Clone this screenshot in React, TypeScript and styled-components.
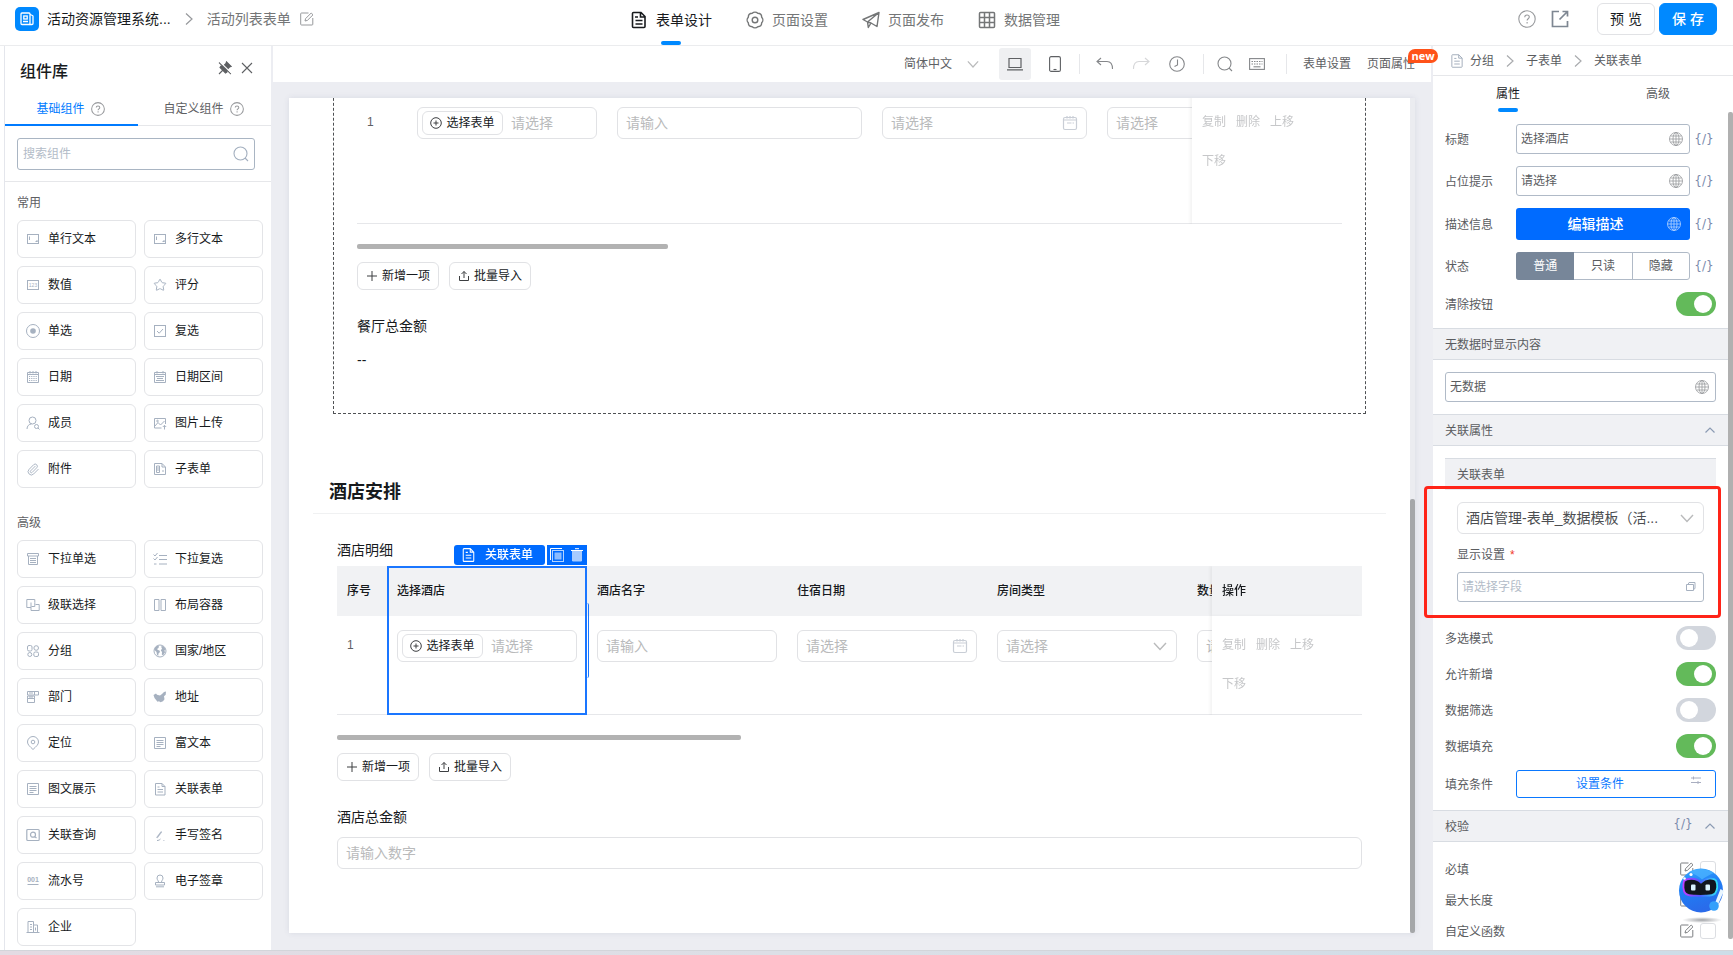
import React from "react";
import styled, { createGlobalStyle, css } from "styled-components";
import { Star, Paperclip, Earth } from "lucide-react";

const GlobalStyle = createGlobalStyle`
  *, *::before, *::after { box-sizing: border-box; }
  body {
    margin: 0;
    background: #fff;
    color: #171a1d;
    font-family: "Liberation Sans", "Noto Sans CJK SC", sans-serif;
    font-size: 12px;
    line-height: 18px;
  }
  button, input, select { font: inherit; color: inherit; margin: 0; }
  button { padding: 0; border: 0; background: none; cursor: pointer; white-space: nowrap; }
  h1, h2, h3, p, ul { margin: 0; padding: 0; font-weight: 400; }
  svg { display: block; flex: none; }
`;

/* ---------- icons ---------- */

type IconProps = {
  w?: number;
  h?: number;
  box?: string;
  color?: string;
  sw?: number;
  children: React.ReactNode;
};

const Icon = ({ w = 14, h = w, box, color = "currentColor", sw = 1, children }: IconProps) => (
  <svg
    width={w}
    height={h}
    viewBox={box ?? `0 0 ${w} ${h}`}
    fill="none"
    stroke={color}
    strokeWidth={sw}
    aria-hidden="true"
  >
    {children}
  </svg>
);

const HelpIcon = ({ size = 14, color = "#97999c" }) => (
  <Icon w={size} box="0 0 18 18" color={color} sw={size > 15 ? 1.1 : 1.3}>
    <circle cx="9" cy="9" r="8.2" />
    <path d="M6.7 7.2c0-1.4 1-2.2 2.3-2.2s2.3.8 2.3 2c0 1.7-2.2 1.8-2.2 3.5" />
    <path d="M9.1 12v1.5" />
  </Icon>
);

const ChevronRight = ({ color = "#97999c" }) => (
  <Icon w={8} h={14} color={color} sw={1.2}>
    <path d="M1 1.5 7 7 1 12.5" />
  </Icon>
);

const ChevronDown = ({ w = 14, color = "#b9babb" }) => (
  <Icon w={w} h={w} box="0 0 14 14" color={color} sw={1.4}>
    <path d="M1 4 7 10.5 13 4" />
  </Icon>
);

const CaretUp = () => (
  <Icon w={10} h={6} color="#8b9bb3" sw={1.2}>
    <path d="M.5 5.5 5 1l4.500 4.500" />
  </Icon>
);

const SearchIcon = ({ color = "#a3afbf" }) => (
  <Icon w={16} color={color} sw={1.1}>
    <circle cx="7.500" cy="7.500" r="6.500" />
    <path d="m12 12 3 3" />
  </Icon>
);

const GlobeIcon = ({ color = "#97999c" }) => (
  <Icon w={14} color={color} sw={0.8}>
    <circle cx="7" cy="7" r="6.500" />
    <ellipse cx="7" cy="7" rx="3" ry="6.500" />
    <path d="M7 .5v13M.5 7h13M1.500 4h11M1.500 10h11" />
  </Icon>
);

const DocIcon = ({ w = 14, h = 15, color = "currentColor", sw = 1 }) => (
  <Icon w={w} h={h} box="0 0 14 16" color={color} sw={sw}>
    <path d="M1 1.500A.8.8 0 0 1 1.800.7H9L13 4.700v9.800a.8.8 0 0 1-.8.8H1.800a.8.8 0 0 1-.8-.8zM9 .7v4h4M3.800 5h2.500M3.800 8.200h6.400M3.800 11.500h6.400" />
  </Icon>
);

const CalendarIcon = () => (
  <Icon w={16} h={16} color="#c9ced6" sw={1.2}>
    <rect x="1.500" y="2.500" width="13" height="12" rx="1.500" />
    <path d="M2 5h12M5 1v2.500M8 1v2.500M11 1v2.500M5 8h4.500M10.500 8H12" />
  </Icon>
);

const EditIcon = ({ color = "#97999c" }) => (
  <Icon w={14} color={color}>
    <path d="M8.500 1H1.500a.8.8 0 0 0-.8.8v10.400a.8.8 0 0 0 .8.8h10.500a.8.8 0 0 0 .8-.8V6" />
    <path d="m5 9 .6-2.400L11.200 1l1.800 1.800-5.600 5.600z" />
  </Icon>
);

const partIcons: Record<string, React.ReactNode> = {
  field: (
    <Icon>
      <rect x="1.500" y="2.500" width="11" height="9" />
      <path d="M3.500 4.500v3.500M9.500 9.500h2M11 8v2" />
    </Icon>
  ),
  number: (
    <Icon>
      <rect x="1.500" y="2.500" width="11" height="9" />
      <text x="7" y="9" fontSize="5" textAnchor="middle" fill="currentColor" stroke="none">
        123
      </text>
    </Icon>
  ),
  star: <Star size={14} strokeWidth={1.7} />,
  radio: (
    <Icon>
      <circle cx="7" cy="7" r="6.500" />
      <circle cx="7" cy="7" r="2.800" fill="currentColor" stroke="none" />
    </Icon>
  ),
  check: (
    <Icon>
      <rect x="1.500" y="1.500" width="11" height="11" />
      <path d="m4 7 2.200 2.200L10 5" />
    </Icon>
  ),
  date: (
    <Icon>
      <path d="M1.500 2.500h11v10h-11zM1.500 4.500h11M4 1v2.500M7 1v2.500M10 1v2.500" />
      <path d="M3 6.500h8M3 8.500h8M3 10.500h8" strokeDasharray="1.200 1" />
    </Icon>
  ),
  range: (
    <Icon>
      <path d="M1.500 2.500h11v10h-11zM1.500 4.500h11M4 1v2.500M10 1v2.500M3 6.500h8M4 8.500h6M3 10.500h8" />
    </Icon>
  ),
  member: (
    <Icon>
      <circle cx="6.500" cy="4.500" r="3.500" />
      <path d="M1 13c0-3 2-5 4.500-5" />
      <circle cx="10.500" cy="10.500" r="2" />
      <path d="m12 12 1.500 1.500" />
    </Icon>
  ),
  image: (
    <Icon>
      <path d="M8.500 12H1.500V2.500h11V8M2 10l3-3.500L7.500 9l4-4M11.500 13.500V9.500M9.800 11l1.700-1.700L13.200 11" />
      <circle cx="4.500" cy="5" r=".8" />
    </Icon>
  ),
  clip: <Paperclip size={13} strokeWidth={1.7} />,
  subform: (
    <Icon>
      <path d="M1.500 1.500H9l3.500 3.500v7.500h-11zM3.500 4h3v6.500h-3zM3.500 6h3M3.500 8h3M9 1.500V5h3M9 9h2" />
    </Icon>
  ),
  dropdown: (
    <Icon>
      <path d="M1.500 1.500h11v2.500h-11zM2.500 4v8.500h9V4M4 6.500h6M4 8.500h6M4 10.500h6" />
    </Icon>
  ),
  dropcheck: (
    <Icon>
      <path d="m.5 2.500 1.500 1.500L4.500 1M.5 6.500 2 8l2.500-3M6 3.500h8M6 7.500h8M6 12h8M1 12h2.500" />
    </Icon>
  ),
  cascade: (
    <Icon>
      <path d="M5 9.500H.8V1.500h8v3M5 4.500v8h8.200V6.500H9.500M8.800 4.500v4H5.500" />
    </Icon>
  ),
  columns: (
    <Icon>
      <path d="M1.500 1.500h4.500v11H1.500zM8 1.500h4.500v11H8z" />
    </Icon>
  ),
  group: (
    <Icon>
      <rect x="1.500" y="1.500" width="4.500" height="5.500" rx="1.500" />
      <circle cx="10.200" cy="4" r="2.300" />
      <circle cx="3.800" cy="10.500" r="2" />
      <rect x="7.800" y="8" width="4.700" height="4.500" rx="1.500" />
    </Icon>
  ),
  country: (
    <Icon>
      <circle cx="7" cy="7" r="6" />
      <path
        d="M2 3.500 4 1.800l2 .4-.5 1.800-1.500 1 1 1 1.500.5.5 1.500-1.500 1.500-.3 2.500L4 11l-.5-3L1.500 6zM8 2.500 10 2l2.500 3-1 1.500.5 2-2 3-1.200-1 .2-2.500L7.800 6.500 9 4.500z"
        fill="currentColor"
        stroke="none"
      />
    </Icon>
  ),
  dept: (
    <Icon>
      <path d="M1.500 1.500h11v3.500h-11zM8.500 1.500V5M1.500 6h7v2.500h-7zM1.500 8.500h7v4h-7z" />
      <path d="M3 3h4M3 7h4" />
    </Icon>
  ),
  address: (
    <Icon>
      <path
        d="M.5 5 3 3.500l1 1.200 3 .8 2-1.500L11 2l2-.5-.3 3.200-1.700 1.500.5 3-1.500 2-2.500 1-1.500-1-1.500.5-2-2.500L1.500 8z"
        fill="currentColor"
        stroke="none"
      />
    </Icon>
  ),
  pin: (
    <Icon>
      <path d="M7 13.500C4 10.500 1.500 8.800 1.500 6a5.500 5.500 0 0 1 11 0C12.500 8.800 10 10.500 7 13.500z" />
      <circle cx="7" cy="6" r="1.800" />
    </Icon>
  ),
  rich: (
    <Icon>
      <path d="M1.500 1.500h11v11h-11zM3.500 4.500h7M3.500 6.500h7M3.500 8.500h7M3.500 10.500h4" />
    </Icon>
  ),
  doc: (
    <Icon>
      <path d="M2.500 1.500H9L12 4.500v8.500H2.500zM9 1.500v3h3M4.500 5h2M4.500 7.500h5.500M4.500 10h5.500" />
    </Icon>
  ),
  query: (
    <Icon sw={1.2}>
      <rect x=".8" y="1.500" width="12.400" height="11" rx="1" />
      <circle cx="7" cy="6.700" r="2.500" />
      <path d="m8.500 8.500 2 1.500" />
    </Icon>
  ),
  sign: (
    <Icon>
      <path d="M3.500 9.500 8 3.500l.8.5L4.500 9.800z" fill="currentColor" strokeWidth="0.500" />
      <path d="M4 12.500c1.500 0 2.500-.5 3.500-1.500M10.500 12.500h.8" />
    </Icon>
  ),
  serial: (
    <Icon>
      <text x="7" y="8" fontSize="7" fontWeight="700" textAnchor="middle" fill="currentColor" stroke="none">
        001
      </text>
      <path d="M1.500 10.500h11" />
    </Icon>
  ),
  stamp: (
    <Icon>
      <path d="M5.500 8c0-1.500-1.500-2-1.500-4a3 3 0 0 1 6 0c0 2-1.500 2.500-1.500 4M2.500 8.500h9v2.500h-9zM3 12.800h8" />
    </Icon>
  ),
  company: (
    <Icon>
      <path d="M.5 12.500h13M2 12.500v-11h5.500v11M7.500 5h4v7.500M4 4.500h2M4 7h2M4 9.500h2M9.500 7.500v3" />
    </Icon>
  ),
};

/* ---------- page shell ---------- */

const Page = styled.div`
  min-height: 100vh;
  display: flex;
  flex-direction: column;
  overflow: hidden;
`;

const Header = styled.header`
  display: grid;
  grid-template-columns: 630fr auto 673fr;
  height: 46px;
  border-bottom: 1px solid #ebecee;
  font-size: 14px;
  line-height: 22px;
`;

const Crumbs = styled.div`
  display: flex;
  align-items: center;
  gap: 14px;
  padding: 0 0 7px 15px;
  white-space: nowrap;
`;

const Brand = styled.a`
  display: flex;
  align-items: center;
  gap: 8px;
  color: #171a1d;
  text-decoration: none;
`;

const Logo = styled.span`
  display: grid;
  place-items: center;
  width: 24px;
  height: 24px;
  border-radius: 5px;
  background: #0089ff;
`;

const FormName = styled.span`
  display: flex;
  align-items: center;
  gap: 9px;
  color: #747677;
`;

const Nav = styled.nav`
  display: flex;
  gap: 34px;
`;

const NavItem = styled.a<{ $active?: boolean }>`
  position: relative;
  display: flex;
  align-items: center;
  gap: 8px;
  padding-bottom: 6px;
  color: ${(p) => (p.$active ? "#171a1d" : "#747677")};
  text-decoration: none;
  white-space: nowrap;
  ${(p) =>
    p.$active &&
    css`
      &::after {
        content: "";
        position: absolute;
        left: 50%;
        bottom: 0;
        width: 20px;
        height: 4px;
        margin-left: -10px;
        border-radius: 2px;
        background: #0089ff;
      }
    `}
`;

const HeaderActions = styled.div`
  display: flex;
  align-items: center;
  justify-content: flex-end;
  gap: 4px;
  padding: 0 16px 7px 0;
`;

const HeaderIcons = styled.div`
  display: flex;
  gap: 15px;
  margin-right: 24px;
`;

const ActionButton = styled.button<{ $primary?: boolean }>`
  width: 58px;
  height: 32px;
  border: 1px solid ${(p) => (p.$primary ? "#0089ff" : "#e1e2e5")};
  border-radius: 6px;
  background: ${(p) => (p.$primary ? "#0089ff" : "#fff")};
  color: ${(p) => (p.$primary ? "#fff" : "#171a1d")};
  font-weight: ${(p) => (p.$primary ? 500 : 400)};
`;

const Body = styled.div`
  flex: 1;
  display: flex;
  gap: 2px;
  padding-left: 4px;
  background: #ecedf2;
  box-shadow: inset 4px 0 #fff;
`;

const PageFoot = styled.div`
  height: 5px;
  border-top: 1px solid #d3d5da;
  background: linear-gradient(90deg, #e3dbe3, #dcdfe6 45%, #cddde8);
`;

/* ---------- component library ---------- */

const Library = styled.aside`
  width: 267px;
  flex: none;
  border-left: 1px solid #e4e6ec;
  background: #fff;
`;

const LibraryHead = styled.div`
  display: flex;
  align-items: center;
  justify-content: space-between;
  height: 48px;
  padding: 4px 18px 0 15px;
`;

const LibraryTitle = styled.h2`
  font-size: 16px;
  line-height: 24px;
  font-weight: 500;
`;

const LibraryTools = styled.div`
  display: flex;
  gap: 9px;
  padding-bottom: 8px;
`;

const LibraryTabs = styled.div`
  display: grid;
  grid-template-columns: 1fr 1fr;
  height: 32px;
  border-bottom: 1px solid #e6e7ea;
`;

const LibraryTab = styled.button<{ $active?: boolean }>`
  display: flex;
  align-items: center;
  justify-content: center;
  gap: 6px;
  height: 32px;
  padding-right: 2px;
  border-bottom: 2px solid ${(p) => (p.$active ? "#007bff" : "transparent")};
  color: ${(p) => (p.$active ? "#007bff" : "#5e6063")};
`;

const SearchArea = styled.div`
  padding: 12px 16px 11px 12px;
  border-bottom: 1px solid #e6e7ea;
`;

const SearchBox = styled.label`
  display: flex;
  align-items: center;
  height: 32px;
  padding: 0 5px;
  border: 1px solid #a9b5c3;
  border-radius: 3px;
`;

const BareInput = styled.input<{ $tone?: string }>`
  flex: 1;
  min-width: 0;
  width: 100%;
  padding: 0;
  border: 0;
  outline: 0;
  background: none;
  &::placeholder {
    color: ${(p) => p.$tone ?? "#b9babb"};
    opacity: 1;
  }
`;

const PartSection = styled.section`
  padding: 12px 8px 0 12px;
  margin-bottom: 14px;
  &:last-child {
    margin-bottom: 4px;
  }
`;

const PartHeading = styled.h3`
  font-size: 12px;
  line-height: 18px;
  color: #5e6063;
`;

const PartGrid = styled.div`
  display: grid;
  grid-template-columns: 1fr 1fr;
  gap: 8px;
  margin-top: 8px;
`;

const PartButton = styled.button`
  display: flex;
  align-items: center;
  gap: 8px;
  height: 38px;
  padding: 0 8px;
  border: 1px solid #e3e4e7;
  border-radius: 6px;
  & > svg {
    width: 14px;
    color: #a6b1c0;
  }
`;

const commonParts = [
  ["field", "单行文本"], ["field", "多行文本"],
  ["number", "数值"], ["star", "评分"],
  ["radio", "单选"], ["check", "复选"],
  ["date", "日期"], ["range", "日期区间"],
  ["member", "成员"], ["image", "图片上传"],
  ["clip", "附件"], ["subform", "子表单"],
];

const advancedParts = [
  ["dropdown", "下拉单选"], ["dropcheck", "下拉复选"],
  ["cascade", "级联选择"], ["columns", "布局容器"],
  ["group", "分组"], ["country", "国家/地区"],
  ["dept", "部门"], ["address", "地址"],
  ["pin", "定位"], ["rich", "富文本"],
  ["rich", "图文展示"], ["doc", "关联表单"],
  ["query", "关联查询"], ["sign", "手写签名"],
  ["serial", "流水号"], ["stamp", "电子签章"],
  ["company", "企业"],
];

const PartList = ({ title, parts }: { title: string; parts: string[][] }) => (
  <PartSection>
    <PartHeading>{title}</PartHeading>
    <PartGrid>
      {parts.map(([icon, name]) => (
        <PartButton key={name}>
          {partIcons[icon]}
          {name}
        </PartButton>
      ))}
    </PartGrid>
  </PartSection>
);

/* ---------- canvas ---------- */

const Workspace = styled.main`
  flex: 1;
  min-width: 0;
  display: flex;
  flex-direction: column;
`;

const Toolbar = styled.div`
  display: flex;
  align-items: center;
  justify-content: flex-end;
  height: 36px;
  padding-right: 16px;
  background: #fff;
  color: #5e6063;
`;

const SelectShell = styled.span<{ $variant: "plain" | "field" }>`
  display: grid;
  align-items: center;
  & > select,
  & > svg {
    grid-area: 1 / 1;
  }
  & > svg {
    justify-self: end;
    pointer-events: none;
    margin-right: ${(p) => (p.$variant === "field" ? "10px" : "0")};
  }
  & > select {
    appearance: none;
    width: 100%;
    border: 0;
    outline: 0;
    background: none;
    padding: 0 26px 0 0;
    ${(p) =>
      p.$variant === "field" &&
      css`
        height: 32px;
        padding: 0 32px 0 8px;
        border: 1px solid #e1e2e5;
        border-radius: 6px;
        background: #fff;
        font-size: 14px;
        color: #b9babb;
        text-overflow: ellipsis;
      `}
  }
`;

const DeviceGroup = styled.div`
  display: flex;
  gap: 8px;
  margin: 0 8px 0 20px;
`;

const ToolButton = styled.button<{ $on?: boolean; $dim?: boolean }>`
  display: grid;
  place-items: center;
  width: 32px;
  height: 32px;
  border-radius: 3px;
  background: ${(p) => (p.$on ? "#eff0f2" : "none")};
  color: ${(p) => (p.$dim ? "#d6d7d9" : p.$on ? "#5e6063" : "#85878a")};
`;

const ToolGroup = styled.div<{ $pad: string; $gap?: number }>`
  position: relative;
  display: flex;
  align-items: center;
  gap: ${(p) => p.$gap ?? 0}px;
  margin-left: 1px;
  padding: ${(p) => p.$pad};
  &::before {
    content: "";
    position: absolute;
    left: -1px;
    top: calc(50% - 10px);
    width: 1px;
    height: 20px;
    background: #e6e7ea;
  }
`;

const TextButton = styled.button`
  position: relative;
  color: #5e6063;
`;

const NewBadge = styled.span`
  position: absolute;
  z-index: 3;
  left: 41px;
  top: -6px;
  padding: 0 3px;
  width: 30px;
  border-radius: 7px 7px 7px 0;
  background: #ff5219;
  color: #fff;
  font-family: "Open Sans", sans-serif;
  font-size: 11px;
  font-weight: 700;
  line-height: 14px;
  text-align: center;
`;

const CanvasArea = styled.div`
  flex: 1;
  display: flex;
  padding: 16px 16px 17px;
`;

const Sheet = styled.div`
  flex: 1;
  min-width: 0;
  display: flex;
  overflow: hidden;
  background: #fff;
  box-shadow: 0 0 6px rgba(60, 70, 110, 0.1);
`;

const SheetContent = styled.div`
  flex: 1;
  min-width: 0;
`;

const SheetTrack = styled.div`
  width: 5px;
  display: flex;
  align-items: flex-end;
  background: #ebecf0;
`;

const SheetThumb = styled.div`
  width: 5px;
  height: 52%;
  border-radius: 2px;
  background: #a5a7a9;
`;

const DashedGroup = styled.section`
  margin: -20px 44px 0;
  padding: 14px 23px 42px;
  border: 1px dashed #4f5154;
`;

const GroupTitle = styled.h2`
  margin: 56px 24px 0;
  padding: 8px 16px 7px;
  border-bottom: 1px solid #f0f1f2;
  font-size: 18px;
  line-height: 28px;
  font-weight: 600;
`;

const HotelGroup = styled.section`
  padding: 25px 48px 0;
`;

const FieldLabel = styled.label`
  display: block;
  font-size: 14px;
  line-height: 22px;
`;

const TableFrame = styled.div`
  position: relative;
  margin-top: 5px;
`;

const TableScroll = styled.div`
  overflow: hidden;
`;

const GridTable = styled.table<{ $rowHeight: number }>`
  table-layout: fixed;
  width: 1600px;
  border-collapse: separate;
  border-spacing: 0;
  th {
    height: 50px;
    padding: 0 10px;
    background: #f1f2f4;
    font-weight: 500;
    text-align: left;
    white-space: nowrap;
  }
  td {
    height: ${(p) => p.$rowHeight}px;
    padding: 14px 10px 0;
    border-bottom: 1px solid #e6e7ea;
    vertical-align: top;
  }
  td:first-child {
    padding-top: 10px;
    line-height: 39px;
    color: #5e6063;
  }
  th:last-child,
  td:last-child {
    position: sticky;
    right: 0;
    box-shadow: -2px 0 3px rgba(0, 0, 0, 0.05);
  }
  td:last-child {
    padding-top: 10px;
    background: #fff;
  }
`;

const RowActions = styled.div`
  display: flex;
  flex-wrap: wrap;
  column-gap: 10px;
  width: 116px;
  button {
    line-height: 39px;
    color: #c6c7c9;
  }
`;

const Box = styled.div<{ $tight?: boolean }>`
  display: flex;
  align-items: center;
  gap: 8px;
  height: 32px;
  padding: 0 ${(p) => (p.$tight ? 4 : 8)}px;
  border: 1px solid #e1e2e5;
  border-radius: 6px;
  background: #fff;
  font-size: 14px;
`;

const SmallButton = styled.button<{ $tall?: boolean }>`
  display: inline-flex;
  flex: none;
  align-items: center;
  justify-content: center;
  gap: 4px;
  height: ${(p) => (p.$tall ? 28 : 24)}px;
  width: ${(p) => (p.$tall ? 82 : 81)}px;
  border: 1px solid #e1e2e5;
  border-radius: 6px;
  font-size: 12px;
  color: #171a1d;
`;

const HorizontalThumb = styled.div<{ $share: number }>`
  width: ${(p) => p.$share}%;
  height: 5px;
  margin: 20px 0 13px;
  border-radius: 2px;
  background: #b2b2b2;
`;

const ButtonRow = styled.div`
  display: flex;
  gap: 10px;
  margin-bottom: 25px;
`;

const EmptyValue = styled.p`
  margin-top: 12px;
  font-size: 14px;
  line-height: 22px;
`;

const TotalBox = styled(Box)`
  margin-top: 9px;
`;

const Selection = styled.div`
  position: absolute;
  top: 0;
  bottom: 0;
  left: 50px;
  width: 200px;
  border: 2px solid #1a76ff;
  pointer-events: none;
  &::after {
    content: "";
    position: absolute;
    top: 35px;
    right: -4px;
    width: 2px;
    height: 75px;
    border-right: 1px solid #1a76ff;
    border-radius: 0 2px 2px 0;
  }
`;

const SelectionBar = styled.div`
  position: absolute;
  right: -2px;
  bottom: calc(100% + 3px);
  display: flex;
  gap: 2px;
  color: #fff;
  pointer-events: auto;
`;

const SelectionTag = styled.span`
  display: flex;
  align-items: center;
  gap: 10px;
  width: 91px;
  height: 20px;
  padding-left: 8px;
  border-radius: 3px;
  background: #006bff;
  font-weight: 500;
  white-space: nowrap;
`;

const SelectionTools = styled.span`
  display: flex;
  align-items: center;
  justify-content: space-between;
  width: 40px;
  height: 20px;
  padding: 0 4px 0 3px;
  background: #006bff;
`;

const PlusCircle = () => (
  <Icon w={12} color="#3c3e41">
    <circle cx="6" cy="6" r="5.300" />
    <path d="M6 3.500v5M3.500 6h5" />
  </Icon>
);

const PickForm = ({ label }: { label: string }) => (
  <Box $tight>
    <SmallButton>
      <PlusCircle />
      选择表单
    </SmallButton>
    <BareInput placeholder="请选择" aria-label={label} />
  </Box>
);

const DateBox = ({ label }: { label: string }) => (
  <Box>
    <BareInput placeholder="请选择" aria-label={label} />
    <CalendarIcon />
  </Box>
);

const TextBox = ({ label }: { label: string }) => (
  <Box>
    <BareInput placeholder="请输入" aria-label={label} />
  </Box>
);

const PickOne = ({ label }: { label: string }) => (
  <SelectShell $variant="field">
    <select aria-label={label}>
      <option>请选择</option>
    </select>
    <ChevronDown />
  </SelectShell>
);

const Actions = () => (
  <RowActions>
    {["复制", "删除", "上移", "下移"].map((t) => (
      <button key={t}>{t}</button>
    ))}
  </RowActions>
);

const TableButtons = () => (
  <ButtonRow>
    <SmallButton $tall>
      <Icon w={12} color="#3c3e41">
        <path d="M6 1v10M1 6h10" />
      </Icon>
      新增一项
    </SmallButton>
    <SmallButton $tall>
      <Icon w={12} color="#3c3e41">
        <path d="M6 8V1.500M3.500 4 6 1.500 8.500 4M1.500 6v4.500h9V6" />
      </Icon>
      批量导入
    </SmallButton>
  </ButtonRow>
);

const MealTable = () => (
  <TableScroll>
    <GridTable $rowHeight={131}>
      <colgroup>
        <col width="50" />
        <col width="200" />
        <col width="265" />
        <col width="225" />
        <col width="200" />
        <col />
        <col width="150" />
      </colgroup>
      <tbody>
        <tr>
          <td>1</td>
          <td><PickForm label="选择餐厅" /></td>
          <td><TextBox label="餐厅名字" /></td>
          <td><DateBox label="用餐日期" /></td>
          <td><PickOne label="餐厅类型" /></td>
          <td />
          <td><Actions /></td>
        </tr>
      </tbody>
    </GridTable>
  </TableScroll>
);

const HotelTable = () => (
  <TableScroll>
    <GridTable $rowHeight={99}>
      <colgroup>
        <col width="50" />
        <col width="200" />
        <col width="200" />
        <col width="200" />
        <col width="200" />
        <col width="200" />
        <col />
        <col width="150" />
      </colgroup>
      <thead>
        <tr>
          <th>序号</th>
          <th>选择酒店</th>
          <th>酒店名字</th>
          <th>住宿日期</th>
          <th>房间类型</th>
          <th>数量</th>
          <th />
          <th>操作</th>
        </tr>
      </thead>
      <tbody>
        <tr>
          <td>1</td>
          <td><PickForm label="选择酒店" /></td>
          <td><TextBox label="酒店名字" /></td>
          <td><DateBox label="住宿日期" /></td>
          <td><PickOne label="房间类型" /></td>
          <td><TextBox label="数量" /></td>
          <td />
          <td><Actions /></td>
        </tr>
      </tbody>
    </GridTable>
  </TableScroll>
);

/* ---------- property panel ---------- */

const Panel = styled.aside`
  position: relative;
  width: 300px;
  flex: none;
  display: flex;
  flex-direction: column;
  background: #fff;
  color: #5a5c5f;
`;

const PanelCrumbs = styled.div`
  display: flex;
  align-items: center;
  gap: 12px;
  height: 30px;
  padding-left: 18px;
  border-bottom: 1px solid #e6e7ea;
  white-space: nowrap;
`;

const CrumbHead = styled.span`
  display: flex;
  align-items: center;
  gap: 7px;
`;

const PanelTabs = styled.div`
  display: grid;
  grid-template-columns: 1fr 1fr;
  height: 36px;
`;

const PanelTab = styled.button<{ $active?: boolean }>`
  position: relative;
  color: ${(p) => (p.$active ? "#171a1d" : "#5a5c5f")};
  ${(p) =>
    p.$active &&
    css`
      &::after {
        content: "";
        position: absolute;
        left: calc(50% - 10px);
        bottom: 0;
        width: 20px;
        height: 4px;
        border-radius: 2px;
        background: #0089ff;
      }
    `}
`;

const PanelBody = styled.div`
  flex: 1;
  display: flex;
`;

const PanelForm = styled.form`
  flex: 1;
  min-width: 0;
`;

const PanelThumb = styled.div`
  width: 5px;
  margin-bottom: 11px;
  border-radius: 2px;
  background: #b0b0b0;
`;

const Fields = styled.div`
  display: flex;
  flex-direction: column;
  gap: 12px;
  padding: 12px;
`;

const Row = styled.div`
  display: flex;
  align-items: center;
`;

const RowLabel = styled.label`
  flex: 0 0 71px;
  padding-top: 2px;
  white-space: nowrap;
`;

const LineBox = styled.div`
  flex: 1;
  min-width: 0;
  display: flex;
  align-items: center;
  height: 30px;
  padding: 0 6px 0 4px;
  border: 1px solid #b0bac7;
  border-radius: 3px;
`;

const Code = styled.button`
  width: 26px;
  padding-left: 2px;
  font-family: "DejaVu Sans", sans-serif;
  color: #7b8bac;
  text-align: center;
`;

const DescribeButton = styled.button`
  flex: 1;
  display: flex;
  align-items: center;
  height: 32px;
  padding: 0 9px 0 8px;
  border-radius: 3px;
  background: #006bff;
  color: #fff;
  font-size: 14px;
  font-weight: 500;
  span {
    flex: 1;
  }
`;

const Segments = styled.div`
  flex: 1;
  display: grid;
  grid-template-columns: repeat(3, 1fr);
  height: 28px;
  border: 1px solid #b0bac7;
  border-radius: 3px;
`;

const Segment = styled.button<{ $on?: boolean }>`
  margin: ${(p) => (p.$on ? "-1px 0 -1px -1px" : "0")};
  border-radius: ${(p) => (p.$on ? "3px 0 0 3px" : "0")};
  background: ${(p) => (p.$on ? "#778699" : "none")};
  color: ${(p) => (p.$on ? "#fff" : "#5a5c5f")};
  & + & + & {
    border-left: 1px solid #b0bac7;
  }
`;

const SwitchRow = styled.label`
  display: flex;
  align-items: center;
  justify-content: space-between;
  span {
    padding-top: 2px;
  }
`;

const Switch = styled.input.attrs({ type: "checkbox" })`
  appearance: none;
  display: block;
  width: 40px;
  height: 24px;
  padding: 3px 4px;
  border-radius: 12px;
  background: #d2d6dd;
  &::before {
    content: "";
    display: block;
    width: 18px;
    height: 18px;
    border-radius: 50%;
    background: #fff;
  }
  &:checked {
    background: #63ba5a;
  }
  &:checked::before {
    margin-left: auto;
  }
`;

const SwitchField = ({ name, on }: { name: string; on?: boolean }) => (
  <SwitchRow>
    <span>{name}</span>
    <Switch defaultChecked={on} />
  </SwitchRow>
);

const Band = styled.h3`
  display: flex;
  align-items: center;
  height: 32px;
  padding: 0 13px 0 12px;
  border-top: 1px solid #d8dce2;
  border-bottom: 1px solid #d8dce2;
  background: #f0f1f4;
  font-size: 12px;
  span {
    flex: 1;
    padding-top: 2px;
  }
  button {
    margin: 0 10px 4px 0;
  }
`;

const SubBand = styled.h3`
  height: 32px;
  padding: 0 12px;
  border-top: 1px solid #d8dce2;
  border-bottom: 1px solid #e8eaee;
  background: #f0f1f4;
  font-size: 12px;
  line-height: 32px;
`;

const RelationFields = styled.div`
  position: relative;
  padding: 0 12px 12px;
`;

const HighlightFrame = styled.div`
  position: absolute;
  top: -16px;
  right: -5px;
  bottom: -4px;
  left: -21px;
  border: 3px solid #ff2418;
  border-radius: 4px;
  pointer-events: none;
`;

const RelationSelect = styled(SelectShell)`
  & > select {
    color: #4c4e51;
  }
`;

const DisplayLabel = styled.label`
  display: block;
  margin: 12px 0 8px;
  line-height: 18px;
  em {
    font-style: normal;
    color: #f03a2c;
    margin-left: 5px;
  }
`;

const FillButton = styled.button`
  flex: 1;
  display: flex;
  height: 28px;
  padding: 4px 14px 0 0;
  border: 1px solid #0a78ff;
  border-radius: 3px;
  color: #0a78ff;
  span {
    flex: 1;
    padding-right: 8px;
  }
`;

const Rules = styled.div`
  padding: 11px 12px 0;
`;

const RuleRow = styled.div`
  display: flex;
  align-items: center;
  gap: 6px;
  height: 31px;
  label {
    flex: 1;
    padding-top: 2px;
  }
`;

const RuleCheck = styled.input.attrs({ type: "checkbox" })`
  appearance: none;
  width: 16px;
  height: 16px;
  border: 1px solid #dcdee2;
  border-radius: 3px;
  background: #fff;
`;

const Assistant = styled.button`
  position: absolute;
  right: 8px;
  bottom: 26px;
`;

const Robot = () => (
  <svg width="48" height="56" viewBox="0 0 48 56" aria-hidden="true">
    <defs>
      <linearGradient id="head" x1="0" y1="0" x2="0.300" y2="1">
        <stop offset="0" stopColor="#35a6ff" />
        <stop offset="0.500" stopColor="#1f7ef5" />
        <stop offset="1" stopColor="#2a6bea" />
      </linearGradient>
      <linearGradient id="visor" x1="0" y1="0" x2="1" y2="0">
        <stop offset="0" stopColor="#c13cff" />
        <stop offset="0.500" stopColor="#4b5cff" />
        <stop offset="1" stopColor="#2fe3f5" />
      </linearGradient>
      <radialGradient id="ground">
        <stop offset="0" stopColor="#8a8d92" stopOpacity="0.800" />
        <stop offset="1" stopColor="#8a8d92" stopOpacity="0" />
      </radialGradient>
    </defs>
    <ellipse cx="25" cy="52" rx="20" ry="3" fill="url(#ground)" />
    <circle cx="24" cy="22.500" r="22" fill="url(#head)" />
    <path d="M12 4C19 0 30 0 37 5c-4 1.500-9 4-12 6.500-3-3-8-6-13-7.500z" fill="#4fb6ff" opacity="0.700" />
    <path d="M7 13c3-3 12-3.500 17 1.500 5-5 13-4.500 15-2 2 4 1.500 10-1 13-3.500 3.500-9 1.500-14.500 2.500-6-1-11.500 1-15-2.500C6 23 6 17 7 13z" fill="#10161f" stroke="url(#visor)" strokeWidth="1.800" />
    <rect x="14" y="16.500" width="4.500" height="6" rx="1" fill="#d9f3ff" />
    <rect x="28.500" y="16.500" width="4.500" height="6" rx="1" fill="#d9f3ff" />
    <circle cx="14" cy="6.500" r="1.600" fill="#fff" />
    <circle cx="7.500" cy="10.500" r="1.300" fill="#fff" />
    <path d="M43.500 21 38 35l3 1.500L47 23z" fill="#eaf6ff" />
    <circle cx="37" cy="38" r="4.800" fill="#35a0fb" />
  </svg>
);

const PropertyPanel = () => (
  <Panel>
    <PanelCrumbs>
      <CrumbHead>
        <DocIcon w={12} h={14} color="#a0abba" sw={1.1} />
        分组
      </CrumbHead>
      <ChevronRight color="#a9abae" />
      子表单
      <ChevronRight color="#a9abae" />
      关联表单
    </PanelCrumbs>
    <PanelTabs>
      <PanelTab $active>属性</PanelTab>
      <PanelTab>高级</PanelTab>
    </PanelTabs>
    <PanelBody>
      <PanelForm onSubmit={(e) => e.preventDefault()}>
        <Fields>
          <Row>
            <RowLabel htmlFor="title">标题</RowLabel>
            <LineBox>
              <BareInput id="title" defaultValue="选择酒店" />
              <GlobeIcon />
            </LineBox>
            <Code type="button">{"{/}"}</Code>
          </Row>
          <Row>
            <RowLabel htmlFor="hint">占位提示</RowLabel>
            <LineBox>
              <BareInput id="hint" defaultValue="请选择" />
              <GlobeIcon />
            </LineBox>
            <Code type="button">{"{/}"}</Code>
          </Row>
          <Row>
            <RowLabel as="span">描述信息</RowLabel>
            <DescribeButton type="button">
              <span>编辑描述</span>
              <GlobeIcon color="#b8d5ff" />
            </DescribeButton>
            <Code type="button">{"{/}"}</Code>
          </Row>
          <Row>
            <RowLabel as="span">状态</RowLabel>
            <Segments>
              <Segment type="button" $on>普通</Segment>
              <Segment type="button">只读</Segment>
              <Segment type="button">隐藏</Segment>
            </Segments>
            <Code type="button">{"{/}"}</Code>
          </Row>
          <SwitchField name="清除按钮" on />
        </Fields>

        <Band>
          <span>无数据时显示内容</span>
        </Band>
        <Fields>
          <Row>
            <LineBox>
              <BareInput defaultValue="无数据" aria-label="无数据时显示内容" />
              <GlobeIcon />
            </LineBox>
          </Row>
        </Fields>

        <Band>
          <span>关联属性</span>
          <CaretUp />
        </Band>
        <Fields>
          <SubBand>关联表单</SubBand>
          <RelationFields>
            <RelationSelect $variant="field">
              <select aria-label="关联表单">
                <option>酒店管理-表单_数据模板（活...</option>
              </select>
              <ChevronDown />
            </RelationSelect>
            <DisplayLabel htmlFor="display">
              显示设置<em>*</em>
            </DisplayLabel>
            <LineBox>
              <BareInput id="display" placeholder="请选择字段" $tone="#b3bcc8" />
              <Icon w={12} color="#a6b1c0">
                <path d="M1.500 3.500h7v6h-7zM3 3.500l1-2h6v6L8.500 8.500" />
              </Icon>
            </LineBox>
            <HighlightFrame />
          </RelationFields>
          <SwitchField name="多选模式" />
          <SwitchField name="允许新增" on />
          <SwitchField name="数据筛选" />
          <SwitchField name="数据填充" on />
          <Row>
            <RowLabel as="span">填充条件</RowLabel>
            <FillButton type="button">
              <span>设置条件</span>
              <Icon w={10} color="#a9aec0">
                <path d="M0 3h10M0 7.500h10M2.500 1.500V4.500M7 6v3" />
              </Icon>
            </FillButton>
          </Row>
        </Fields>

        <Band>
          <span>校验</span>
          <Code type="button">{"{/}"}</Code>
          <CaretUp />
        </Band>
        <Rules>
          {["必填", "最大长度", "自定义函数"].map((name, i) => (
            <RuleRow key={name}>
              <label htmlFor={`rule-${i}`}>{name}</label>
              <button type="button" aria-label={`编辑${name}`}>
                <EditIcon color="#7d7f82" />
              </button>
              <RuleCheck id={`rule-${i}`} />
            </RuleRow>
          ))}
        </Rules>
      </PanelForm>
      <PanelThumb />
    </PanelBody>
    <Assistant aria-label="智能助手">
      <Robot />
    </Assistant>
  </Panel>
);

/* ---------- app ---------- */

export default function App() {
  return (
    <Page>
      <GlobalStyle />
      <Header>
        <Crumbs>
          <Brand href="#">
            <Logo>
              <Icon w={14} color="#fff" sw={1.3}>
                <rect x="1" y="1" width="9" height="11.500" rx="1" />
                <path d="M10 2.500 12.500 3.500a.8.8 0 0 1 .5.700V11.500a1 1 0 0 1-1 1H9M3 9.500h5" />
                <rect x="3.800" y="4" width="3.400" height="3" />
              </Icon>
            </Logo>
            活动资源管理系统...
          </Brand>
          <ChevronRight />
          <FormName>
            活动列表表单
            <EditIcon />
          </FormName>
        </Crumbs>
        <Nav>
          <NavItem href="#" $active>
            <Icon w={18} h={18} sw={1.6}>
              <path d="M2.500 2.500a1 1 0 0 1 1-1h7.500l4 4v10a1 1 0 0 1-1 1H3.500a1 1 0 0 1-1-1zM10.500 1.500v4.500H15M5 6h3M5.500 9.500h7M5.500 13h7" />
            </Icon>
            表单设计
          </NavItem>
          <NavItem href="#">
            <Icon w={18} h={18} sw={1.4}>
              <path
                d="M6.200 2.300A4 4 0 0 1 11.800 2.300A4 4 0 0 1 15.700 6.200A4 4 0 0 1 15.700 11.800A4 4 0 0 1 11.800 15.700A4 4 0 0 1 6.200 15.700A4 4 0 0 1 2.300 11.800A4 4 0 0 1 2.300 6.200A4 4 0 0 1 6.200 2.300z"
                strokeLinejoin="round"
              />
              <circle cx="9" cy="9" r="2.800" />
            </Icon>
            页面设置
          </NavItem>
          <NavItem href="#">
            <Icon w={18} h={18} sw={1.4}>
              <path d="M17 1.500 1 8.500l4.500 2.500zM17 1.500l-2 14-6-3.500L5.500 11 17 1.500zM5.500 11l.8 5.500L9 12" strokeLinejoin="round" />
            </Icon>
            页面发布
          </NavItem>
          <NavItem href="#">
            <Icon w={18} h={18} sw={1.5}>
              <rect x="1.500" y="1.500" width="15" height="15" rx="1" />
              <path d="M1.500 6.500h15M1.500 11.500h15M6.500 1.500v15M11.500 1.500v15" />
            </Icon>
            数据管理
          </NavItem>
        </Nav>
        <HeaderActions>
          <HeaderIcons>
            <button aria-label="帮助">
              <HelpIcon size={18} />
            </button>
            <button aria-label="新窗口打开">
              <Icon w={18} color="#7e8792" sw={1.7}>
                <path d="M8 1.500H1.500v15h15V11M11.500 1.500h5v5M16 2 8.500 9.500" />
              </Icon>
            </button>
          </HeaderIcons>
          <ActionButton>预 览</ActionButton>
          <ActionButton $primary>保 存</ActionButton>
        </HeaderActions>
      </Header>

      <Body>
        <Library>
          <LibraryHead>
            <LibraryTitle>组件库</LibraryTitle>
            <LibraryTools>
              <button aria-label="取消固定">
                <Icon w={14} color="#5e6063" sw={1.1}>
                  <path d="M8.500.8 13.200 5.500 11.500 6 9 8.500V11L7.500 12 2 6.500 3 5h2.500L8 2.500z" fill="#5e6063" />
                  <path d="M5 9 1 13M1 1.500 13 13" />
                  <path d="M2 .8 14 12.500" stroke="#fff" />
                </Icon>
              </button>
              <button aria-label="关闭">
                <Icon w={12} h={14} color="#5e6063" sw={1.1}>
                  <path d="m1 2 10 10M11 2 1 12" />
                </Icon>
              </button>
            </LibraryTools>
          </LibraryHead>
          <LibraryTabs>
            <LibraryTab $active>
              基础组件
              <HelpIcon />
            </LibraryTab>
            <LibraryTab>
              自定义组件
              <HelpIcon />
            </LibraryTab>
          </LibraryTabs>
          <SearchArea>
            <SearchBox>
              <BareInput placeholder="搜索组件" aria-label="搜索组件" $tone="#b3bcc8" />
              <SearchIcon />
            </SearchBox>
          </SearchArea>
          <PartList title="常用" parts={commonParts} />
          <PartList title="高级" parts={advancedParts} />
        </Library>

        <Workspace>
          <Toolbar>
            <SelectShell $variant="plain">
              <select aria-label="语言">
                <option>简体中文</option>
              </select>
              <ChevronDown w={12} />
            </SelectShell>
            <DeviceGroup>
              <ToolButton $on aria-label="电脑端">
                <Icon w={16} h={14} sw={1.2}>
                  <path d="M2 1.500h12v9H2zM0 12.800h16" />
                </Icon>
              </ToolButton>
              <ToolButton aria-label="移动端">
                <Icon w={12} h={16} color="#5e6063" sw={1.1}>
                  <rect x=".6" y=".6" width="10.800" height="14.800" rx="1.500" />
                  <path d="M4.500 13.500h3" />
                </Icon>
              </ToolButton>
            </DeviceGroup>
            <ToolGroup $pad="0 10px 0 9px" $gap={4}>
              <ToolButton aria-label="撤销">
                <Icon w={18} h={14} sw={1.1}>
                  <path d="M5 1 1 4.500 5 8M1 4.500h10c3.500 0 5.500 2.500 5.500 7.500" />
                </Icon>
              </ToolButton>
              <ToolButton $dim aria-label="重做">
                <Icon w={18} h={14} sw={1.1}>
                  <path d="m13 1 4 3.500L13 8M17 4.500H7C3.500 4.500 1.500 7 1.500 12" />
                </Icon>
              </ToolButton>
              <ToolButton aria-label="历史">
                <Icon w={16} sw={1.1}>
                  <circle cx="8" cy="8" r="7.300" />
                  <path d="M8.500 3.500V9L5.500 10.500" />
                </Icon>
              </ToolButton>
            </ToolGroup>
            <ToolGroup $pad="0 13px 0 5px">
              <ToolButton aria-label="查找">
                <SearchIcon color="currentColor" />
              </ToolButton>
              <ToolButton aria-label="快捷键">
                <Icon w={16} h={12} sw={1.1}>
                  <rect x=".6" y=".6" width="14.800" height="10.800" />
                  <path d="M2.500 3.500h11M2.500 6h11" strokeDasharray="1.500 1" />
                  <path d="M4.500 8.800h7" />
                </Icon>
              </ToolButton>
            </ToolGroup>
            <ToolGroup $pad="0 0 0 16px" $gap={16}>
              <TextButton>表单设置</TextButton>
              <TextButton>
                页面属性
                <NewBadge>new</NewBadge>
              </TextButton>
            </ToolGroup>
          </Toolbar>

          <CanvasArea>
            <Sheet>
              <SheetContent>
                <DashedGroup>
                  <MealTable />
                  <HorizontalThumb $share={31.6} />
                  <TableButtons />
                  <FieldLabel as="p">餐厅总金额</FieldLabel>
                  <EmptyValue>--</EmptyValue>
                </DashedGroup>

                <GroupTitle>酒店安排</GroupTitle>
                <HotelGroup>
                  <FieldLabel as="p">酒店明细</FieldLabel>
                  <TableFrame>
                    <HotelTable />
                    <Selection>
                      <SelectionBar>
                        <SelectionTag>
                          <DocIcon w={13} h={14} sw={1.2} />
                          关联表单
                        </SelectionTag>
                        <SelectionTools>
                          <button aria-label="复制控件">
                            <Icon w={14}>
                              <path d="M.5 12V.5H12" />
                              <rect x="2.500" y="2.500" width="11" height="11" opacity="0.700" />
                              <rect x="5" y="5" width="6" height="6" fill="#fff" opacity="0.550" />
                            </Icon>
                          </button>
                          <button aria-label="删除控件">
                            <Icon w={12} h={14}>
                              <path d="M0 2.500h12M4 .7h4" />
                              <path d="M1.500 3h9v10h-9z" fill="#fff" opacity="0.650" />
                            </Icon>
                          </button>
                        </SelectionTools>
                      </SelectionBar>
                    </Selection>
                  </TableFrame>
                  <HorizontalThumb $share={39.4} />
                  <TableButtons />
                  <FieldLabel htmlFor="total">酒店总金额</FieldLabel>
                  <TotalBox>
                    <BareInput id="total" placeholder="请输入数字" />
                  </TotalBox>
                </HotelGroup>
              </SheetContent>
              <SheetTrack>
                <SheetThumb />
              </SheetTrack>
            </Sheet>
          </CanvasArea>
        </Workspace>

        <PropertyPanel />
      </Body>
      <PageFoot />
    </Page>
  );
}
